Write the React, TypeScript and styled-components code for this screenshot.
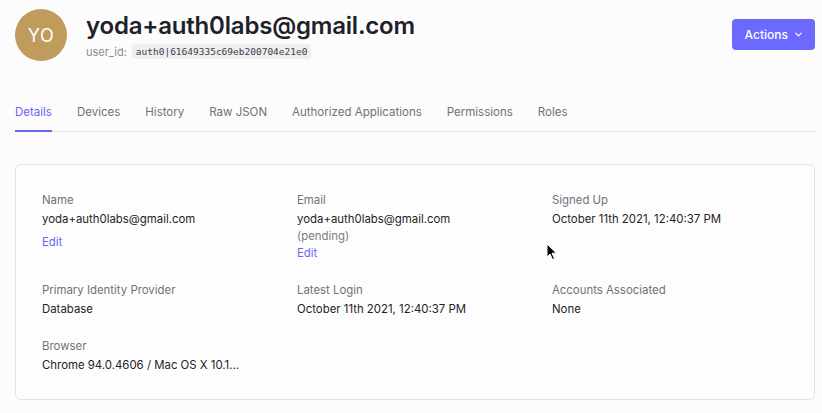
import React from "react";
import styled, { createGlobalStyle } from "styled-components";

const Global = createGlobalStyle`
  html, body { margin: 0; padding: 0; background: #fcfcfd; }
  body { font-family: Inter, "Noto Sans", Arial, sans-serif; color: #1f2328; -webkit-font-smoothing: antialiased; }
  * { box-sizing: border-box; }
`;

const Page = styled.div`
  position: relative;
  padding: 9px 7px 0 15px;
  width: 822px;
  height: 413px;
  overflow: hidden;
`;

const Header = styled.div`
  display: flex;
  align-items: flex-start;
  justify-content: space-between;
`;

const Identity = styled.div`
  display: flex;
  align-items: center;
  gap: 19px;
`;

const Avatar = styled.div`
  width: 52px;
  height: 52px;
  border-radius: 50%;
  background: #bf9c5c;
  color: #fff;
  display: flex;
  align-items: center;
  justify-content: center;
  font-size: 18px;
  font-weight: 400;
  letter-spacing: 0.5px;
`;

const NameBlock = styled.div`
  display: flex;
  flex-direction: column;
  gap: 3px;
`;

const Title = styled.h1`
  margin: 0;
  font-size: 24px;
  line-height: 30px;
  font-weight: 600;
  color: #1e2129;
  letter-spacing: -0.2px;
`;

const IdRow = styled.div`
  display: flex;
  align-items: center;
  gap: 5px;
  font-size: 11px;
  color: #8a8d94;
`;

const Code = styled.code`
  font-family: "DejaVu Sans Mono", "Liberation Mono", monospace;
  font-size: 9.5px;
  background: #efeff1;
  color: #3b3e45;
  padding: 2px 4px;
  border-radius: 3px;
`;

const ActionsButton = styled.button`
  margin-top: 10px;
  display: flex;
  align-items: center;
  gap: 6px;
  height: 31px;
  padding: 0 12px 0 13px;
  border: none;
  border-radius: 4px;
  background: #6c69ff;
  color: #fff;
  font-family: inherit;
  font-size: 12px;
  font-weight: 500;
`;

const Tabs = styled.nav`
  margin-top: 43px;
  display: flex;
  gap: 25px;
  border-bottom: 1px solid #e6e6e9;
`;

const Tab = styled.div<{ $active?: boolean }>`
  font-size: 11.5px;
  line-height: 16px;
  padding-bottom: 10px;
  color: ${(p) => (p.$active ? "#6a66f2" : "#6f727a")};
  border-bottom: 2px solid ${(p) => (p.$active ? "#6a66f2" : "transparent")};
  margin-bottom: -1px;
`;

const Card = styled.section`
  margin-top: 32px;
  border: 1px solid #e3e3e6;
  border-radius: 6px;
  background: #fdfdfd;
  padding: 26px 26px 25px;
  display: grid;
  grid-template-columns: 255px 255px 1fr;
  row-gap: 19px;
`;

const Field = styled.div`
  display: flex;
  flex-direction: column;
  font-size: 11.4px;
  line-height: 18px;
`;

const Label = styled.div`
  color: #6f727a;
  margin-bottom: 1px;
`;

const Value = styled.div<{ $muted?: boolean }>`
  color: ${(p) => (p.$muted ? "#7a7d84" : "#1f2328")};
  line-height: ${(p) => (p.$muted ? "17px" : "18px")};
`;

const EditLink = styled.a<{ $gap?: number; $tight?: boolean }>`
  color: #6a66f2;
  text-decoration: none;
  margin-top: ${(p) => p.$gap ?? 0}px;
  line-height: ${(p) => (p.$tight ? "17px" : "18px")};
`;

const Cursor = styled.svg`
  position: absolute;
  left: 546px;
  top: 243px;
`;

const Chevron = () => (
  <svg width="9" height="9" viewBox="0 0 10 10" fill="none">
    <path d="M2 3.5 L5 6.5 L8 3.5" stroke="#fff" strokeWidth="1.3" strokeLinecap="round" strokeLinejoin="round" />
  </svg>
);

export default function App() {
  const tabs = ["Details", "Devices", "History", "Raw JSON", "Authorized Applications", "Permissions", "Roles"];
  return (
    <Page>
      <Global />
      <Header>
        <Identity>
          <Avatar>YO</Avatar>
          <NameBlock>
            <Title>yoda+auth0labs@gmail.com</Title>
            <IdRow>
              user_id:<Code>auth0|61649335c69eb200704e21e0</Code>
            </IdRow>
          </NameBlock>
        </Identity>
        <ActionsButton>
          Actions <Chevron />
        </ActionsButton>
      </Header>
      <Tabs>
        {tabs.map((t, i) => (
          <Tab key={t} $active={i === 0}>
            {t}
          </Tab>
        ))}
      </Tabs>
      <Card>
        <Field>
          <Label>Name</Label>
          <Value>yoda+auth0labs@gmail.com</Value>
          <EditLink href="#" $gap={5}>Edit</EditLink>
        </Field>
        <Field>
          <Label>Email</Label>
          <Value>yoda+auth0labs@gmail.com</Value>
          <Value $muted>(pending)</Value>
          <EditLink href="#" $tight>Edit</EditLink>
        </Field>
        <Field>
          <Label>Signed Up</Label>
          <Value>October 11th 2021, 12:40:37 PM</Value>
        </Field>
        <Field>
          <Label>Primary Identity Provider</Label>
          <Value>Database</Value>
        </Field>
        <Field>
          <Label>Latest Login</Label>
          <Value>October 11th 2021, 12:40:37 PM</Value>
        </Field>
        <Field>
          <Label>Accounts Associated</Label>
          <Value>None</Value>
        </Field>
        <Field>
          <Label>Browser</Label>
          <Value>Chrome 94.0.4606 / Mac OS X 10.1...</Value>
        </Field>
      </Card>
      <Cursor width="12" height="18" viewBox="0 0 12 18">
        <path d="M1 1 L1 14 L4 11 L6.5 16.5 L8.5 15.6 L6 10.2 L10.5 10.2 Z" fill="#000" stroke="#fff" strokeWidth="1" />
      </Cursor>
    </Page>
  );
}
